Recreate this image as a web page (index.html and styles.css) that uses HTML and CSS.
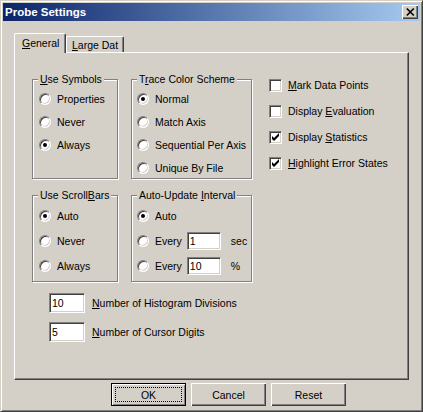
FILE: index.html
```html
<!DOCTYPE html>
<html>
<head>
<meta charset="utf-8">
<link rel="stylesheet" href="styles.css">
</head>
<body>
<div class="window">
  <div class="titlebar">
    <span class="title">Probe Settings</span>
    <span class="close"><svg width="16" height="14" viewBox="0 0 16 14"><path d="M4.8 3.5 L11.8 10.5 M11.8 3.5 L4.8 10.5" stroke="#000" stroke-width="1.7" fill="none"/></svg></span>
  </div>
  <div class="content">
    <div class="tabs">
      <div class="tab active"><u>G</u>eneral</div>
      <div class="tab large"><u>L</u>arge Dat</div>
    </div>
    <div class="panel">
      <div class="grid">
        <div class="group narrow">
          <div class="legend"><u>U</u>se Symbols</div>
          <div class="opt"><span class="radio"></span>Properties</div>
          <div class="opt"><span class="radio"></span>Never</div>
          <div class="opt"><span class="radio on"></span>Always</div>
        </div>
        <div class="group wide">
          <div class="legend">T<u>r</u>ace Color Scheme</div>
          <div class="opt"><span class="radio on"></span>Normal</div>
          <div class="opt"><span class="radio"></span>Match Axis</div>
          <div class="opt"><span class="radio"></span>Sequential Per Axis</div>
          <div class="opt"><span class="radio"></span>Unique By File</div>
        </div>
        <div class="checks">
          <div class="check"><span class="box"></span><span><u>M</u>ark Data Points</span></div>
          <div class="check"><span class="box"></span><span>Display <u>E</u>valuation</span></div>
          <div class="check"><span class="box"><svg width="11" height="11" viewBox="0 0 11 11"><path d="M2 4 L4 6 L9 1 L9 4 L4 9 L2 7 Z" fill="#000"/></svg></span><span>Display <u>S</u>tatistics</span></div>
          <div class="check"><span class="box"><svg width="11" height="11" viewBox="0 0 11 11"><path d="M2 4 L4 6 L9 1 L9 4 L4 9 L2 7 Z" fill="#000"/></svg></span><span><u>H</u>ighlight Error States</span></div>
        </div>
        <div class="group narrow row2">
          <div class="legend">Use Scroll<u>B</u>ars</div>
          <div class="opt"><span class="radio on"></span>Auto</div>
          <div class="opt"><span class="radio"></span>Never</div>
          <div class="opt"><span class="radio"></span>Always</div>
        </div>
        <div class="group wide row2">
          <div class="legend">Auto-Update <u>I</u>nterval</div>
          <div class="opt"><span class="radio on"></span>Auto</div>
          <div class="opt"><span class="radio"></span>Every<input class="edit small" value="1">sec</div>
          <div class="opt"><span class="radio"></span>Every<input class="edit small" value="10">%</div>
        </div>
      </div>
      <div class="fields">
        <div class="field"><input class="edit" value="10"><span><u>N</u>umber of Histogram Divisions</span></div>
        <div class="field"><input class="edit" value="5"><span><u>N</u>umber of Cursor Digits</span></div>
      </div>
    </div>
    <div class="buttons">
      <button class="btn default"><span class="focus">OK</span></button>
      <button class="btn">Cancel</button>
      <button class="btn">Reset</button>
    </div>
  </div>
</div>
</body>
</html>
```
FILE: styles.css
```css
* { box-sizing: border-box; }
html, body { margin: 0; padding: 0; }
body {
  width: 423px;
  height: 412px;
  overflow: hidden;
  font-family: "Liberation Sans", Arial, sans-serif;
  font-size: 10.5px;
  color: #000;
  background: #d4d0c8;
}
.window {
  width: 423px;
  height: 412px;
  background: #d4d0c8;
  border: 1px solid;
  border-color: #d4d0c8 #404040 #404040 #d4d0c8;
  box-shadow: inset 1px 1px #fff, inset -1px -1px #808080;
  padding: 2px;
  display: flex;
  flex-direction: column;
}
.titlebar {
  height: 18px;
  flex: none;
  background: linear-gradient(to right, #0a246a, #a6caf0);
  display: flex;
  align-items: center;
  justify-content: space-between;
  padding: 0 2px;
}
.title {
  color: #fff;
  font-weight: bold;
  font-size: 11.5px;
  line-height: 14px;
}
.close {
  width: 16px;
  height: 14px;
  background: #d4d0c8;
  box-shadow: inset 1px 1px #fff, inset -1px -1px #404040, inset -2px -2px #808080;
  display: block;
}
.close svg { display: block; }
.content {
  flex: 1;
  padding: 12px 11px 0 11px;
  display: flex;
  flex-direction: column;
}
.tabs {
  display: flex;
  align-items: flex-end;
  height: 19px;
  flex: none;
}
.tab {
  height: 16px;
  border-top: 1px solid #fff;
  border-left: 1px solid #fff;
  border-right: 1px solid #404040;
  border-radius: 2px 2px 0 0;
  box-shadow: inset -1px 0 #808080;
  padding: 2px 0 0 5px;
  line-height: 13px;
  white-space: nowrap;
  background: #d4d0c8;
}
.tab.active {
  width: 52px;
  height: 20px;
  margin-bottom: -1px;
  padding: 3px 0 0 7px;
  position: relative;
  z-index: 1;
}
.tab.large { width: 58px; }
.panel {
  width: 395px;
  height: 328px;
  flex: none;
  border: 1px solid;
  border-color: #fff #404040 #404040 #fff;
  box-shadow: inset -1px -1px #808080;
  padding: 26px 0 0 17px;
}
.grid {
  display: grid;
  grid-template-columns: 86px 121px auto;
  grid-template-rows: 100px 87px;
  column-gap: 13px;
  row-gap: 16px;
}
.group {
  border: 1px solid #808080;
  box-shadow: inset 1px 1px #fff, 1px 1px #fff;
  display: flex;
  flex-direction: column;
}
.legend {
  align-self: flex-start;
  margin: -7px 0 1px 5px;
  padding: 0 2px;
  line-height: 13px;
  background: #d4d0c8;
  white-space: nowrap;
}
.opt {
  display: flex;
  align-items: center;
  height: 23px;
  padding-left: 6px;
  white-space: nowrap;
  flex: none;
}
.wide .opt { padding-left: 5px; }
.row2 .opt { height: 25px; }
.radio {
  width: 12px;
  height: 12px;
  flex: none;
  border: 1px solid;
  border-color: #808080 #fff #fff #808080;
  border-radius: 50%;
  background: #fff;
  box-shadow: inset 1px 1px #404040, inset -1px -1px #d4d0c8;
  margin-right: 6px;
  display: flex;
  align-items: center;
  justify-content: center;
}
.radio.on::after {
  content: "";
  width: 4px;
  height: 4px;
  border-radius: 50%;
  background: #000;
}
.checks {
  grid-column: 3;
  grid-row: 1;
  align-self: start;
  margin-top: -7px;
  padding-left: 4px;
}
.check {
  display: flex;
  align-items: center;
  height: 26px;
  white-space: nowrap;
}
.box {
  width: 13px;
  height: 13px;
  flex: none;
  border: 1px solid;
  border-color: #808080 #fff #fff #808080;
  box-shadow: inset 1px 1px #404040, inset -1px -1px #d4d0c8;
  background: #fff;
  margin-right: 6px;
}
.box svg { display: block; }
.edit {
  width: 36px;
  height: 20px;
  flex: none;
  border: 1px solid;
  border-color: #808080 #fff #fff #808080;
  box-shadow: inset 1px 1px #404040, inset -1px -1px #d4d0c8;
  background: #fff;
  font: inherit;
  color: #000;
  padding: 0 0 0 2px;
  margin: 0 7px 0 0;
  outline: none;
}
.edit.small {
  width: 34px;
  height: 18px;
  margin: 0 10px 0 5px;
}
.fields {
  margin-top: 11px;
  padding-left: 17px;
  display: flex;
  flex-direction: column;
  gap: 9px;
}
.field {
  display: flex;
  align-items: center;
  height: 20px;
  white-space: nowrap;
}
.buttons {
  display: flex;
  gap: 5px;
  margin-top: 3px;
  padding-left: 97px;
}
.btn {
  width: 75px;
  height: 23px;
  background: #d4d0c8;
  border: none;
  box-shadow: inset 1px 1px #fff, inset -1px -1px #404040, inset -2px -2px #808080;
  font: inherit;
  color: #000;
  padding: 0;
  display: flex;
  align-items: center;
  justify-content: center;
}
.btn.default {
  border: 1px solid #000;
  box-shadow: inset 1px 1px #fff, inset -1px -1px #808080;
  padding: 3px;
  align-items: stretch;
}
.focus {
  flex: 1;
  border: 1px dotted #000;
  display: flex;
  align-items: center;
  justify-content: center;
}
```
